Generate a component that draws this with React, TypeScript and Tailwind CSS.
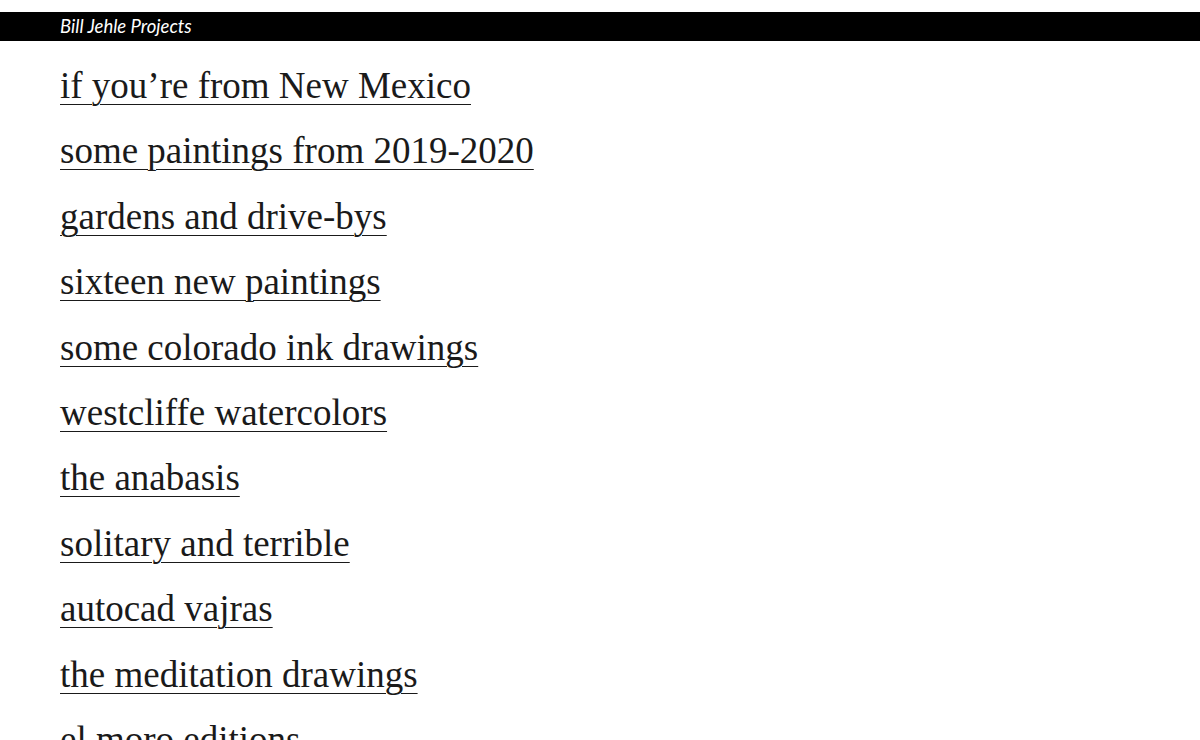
export default function App() {
  const projects = [
    "if you’re from New Mexico",
    "some paintings from 2019-2020",
    "gardens and drive-bys",
    "sixteen new paintings",
    "some colorado ink drawings",
    "westcliffe watercolors",
    "the anabasis",
    "solitary and terrible",
    "autocad vajras",
    "the meditation drawings",
    "el moro editions",
  ];

  return (
    <div className="h-[740px] overflow-hidden bg-white pt-3">
      {/* Title bar */}
      <div className="h-[29px] bg-black px-[60px] flex items-center">
        <span className="text-white italic text-[18.5px] font-['Lato',sans-serif]">
          Bill Jehle Projects
        </span>
      </div>

      {/* Project list */}
      <ul className="px-[60px] pt-[12px] font-['Liberation_Serif',serif] text-[37px] leading-[65.4px] text-[#1a1a1a]">
        {projects.map((p) => (
          <li key={p}>
            <a
              href="#"
              className="underline decoration-1 underline-offset-[6px]"
            >
              {p}
            </a>
          </li>
        ))}
      </ul>
    </div>
  );
}
